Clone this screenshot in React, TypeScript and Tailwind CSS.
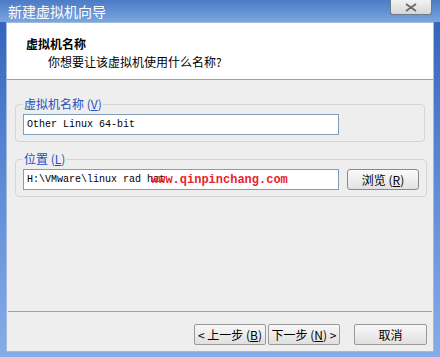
export default function App() {
  const cn = '"SimSun", "Noto Sans CJK SC", "Liberation Sans", sans-serif';
  return (
    <div
      className="flex h-[357px] w-[440px] flex-col overflow-hidden bg-gradient-to-b from-[#2f5fb8] via-[#5d8ad6] to-[#86ade8] text-[12px]"
      style={{ fontFamily: cn }}
    >
      {/* title bar */}
      <div className="flex h-[22px] items-start justify-between pl-[8px] pr-[8px] bg-gradient-to-b from-[#4a7bc4] to-[#7ba6df]">
        <span className="pt-[3px] text-[14px] leading-[16px] text-white">新建虚拟机向导</span>
        <div className="flex h-[15px] w-[42px] items-center justify-center rounded-b-[3px] border border-t-0 border-[#6d7a8c] bg-gradient-to-b from-[#f2f2f2] to-[#d8d8d8]">
          <svg width="12" height="9" viewBox="0 0 12 9" fill="none" stroke="#666" strokeWidth="1.6">
            <path d="M1 1 L11 8 M11 1 L1 8" />
          </svg>
        </div>
      </div>

      {/* window body */}
      <div className="mx-[6px] mb-[5px] flex flex-1 flex-col border border-[#9fb9df] bg-[#eeeeee]">
        <div className="h-[57px] border-b border-[#a0a0a0] bg-white pl-[19px] pt-[14px]">
          <div className="text-[12px] font-bold leading-[14px] text-black">虚拟机名称</div>
          <div className="pl-[22px] pt-[4px] text-[12px] leading-[14px] text-black">你想要让该虚拟机使用什么名称?</div>
        </div>

        <div className="flex flex-col gap-[10px] px-[8px] pt-[17px]">
          <fieldset className="rounded-[4px] border border-[#d5d5d5] px-[7px] pb-[6px] pt-[3px]">
            <legend className="px-[1px] text-[12px] leading-[14px] text-[#1f4ec2]">
              虚拟机名称 (<span className="underline">V</span>)
            </legend>
            <div className="flex h-[21px] w-[316px] items-center border border-[#7f9db9] bg-white px-[3px] font-['Liberation_Mono',monospace] text-[10px] text-black">
              Other Linux 64-bit
            </div>
          </fieldset>

          <fieldset className="rounded-[4px] border border-[#d5d5d5] px-[7px] pb-[6px] pt-[3px]">
            <legend className="px-[1px] text-[12px] leading-[14px] text-[#1f4ec2]">
              位置 (<span className="underline">L</span>)
            </legend>
            <div className="flex items-center gap-[8px]">
              <div className="relative flex h-[21px] w-[316px] items-center border border-[#7f9db9] bg-white px-[3px] font-['Liberation_Mono',monospace] text-[10px] text-black">
                H:\VMware\linux rad hat
                <span className="absolute left-[127px] top-[1px] font-['Liberation_Mono',monospace] text-[12px] font-bold text-[#e8252a]">
                  www.qinpinchang.com
                </span>
              </div>
              <button className="flex h-[21px] w-[72px] items-center justify-center rounded-[3px] border border-[#8a8a8a] bg-gradient-to-b from-[#fbfbfb] to-[#e2e2e2] text-[12px] text-black">
                浏览 (<span className="underline">R</span>)
              </button>
            </div>
          </fieldset>
        </div>

        <div className="flex-1" />
        <div className="mx-[1px] border-t border-[#a0a0a0]" />
        <div className="flex items-center justify-end pb-[6px] pl-[7px] pr-[6px] pt-[12px]">
          <button className="flex h-[21px] w-[72px] items-center justify-center rounded-[2px] border border-[#9a9a9a] bg-gradient-to-b from-[#f8f8f8] to-[#e0e0e0] text-[12px] text-black">
            &lt; 上一步 (<span className="underline">B</span>)
          </button>
          <button className="ml-[2px] flex h-[21px] w-[72px] items-center justify-center rounded-[2px] border border-[#9a9a9a] bg-gradient-to-b from-[#f8f8f8] to-[#e0e0e0] text-[12px] text-black">
            下一步 (<span className="underline">N</span>) &gt;
          </button>
          <button className="ml-[14px] flex h-[21px] w-[73px] items-center justify-center rounded-[2px] border border-[#9a9a9a] bg-gradient-to-b from-[#f8f8f8] to-[#e0e0e0] text-[12px] text-black">
            取消
          </button>
        </div>
      </div>
    </div>
  );
}
